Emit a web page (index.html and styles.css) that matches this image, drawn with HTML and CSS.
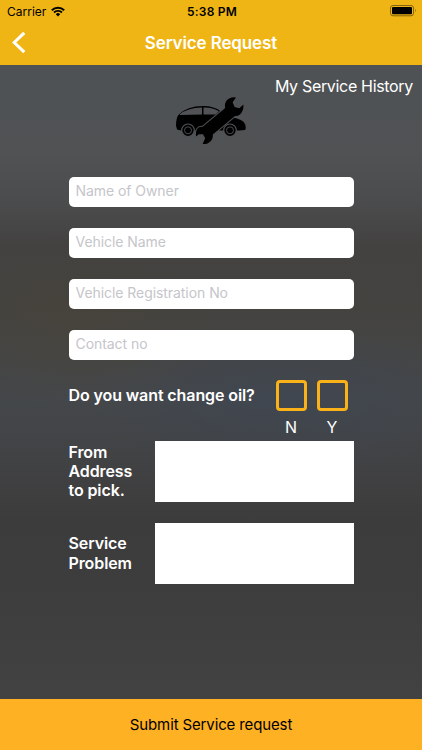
FILE: index.html
```html
<!DOCTYPE html>
<html lang="en">
<head>
    <meta charset="UTF-8">
    <meta name="viewport" content="width=device-width, initial-scale=1.0">
    <title>Service Request</title>
    <link rel="stylesheet" href="styles.css">
</head>
<body>
    <header class="header">
        <div class="status-bar">
            <div class="carrier">
                <span>Carrier</span>
                <svg class="wifi" viewBox="0 0 14 11" width="14" height="11">
                    <path d="M0.8 4.2a9 9 0 0 1 12.4 0M3 6.5a5.8 5.8 0 0 1 8 0" fill="none" stroke="#000" stroke-width="1.9"/>
                    <path d="M4.8 8.2a3.1 3.1 0 0 1 4.4 0L7 10.5z"/>
                </svg>
            </div>
            <span class="time">5:38 PM</span>
            <svg class="battery" viewBox="0 0 27 12" width="27" height="12">
                <rect x="0.5" y="0.5" width="23" height="10.3" rx="2.5" fill="none" stroke="#84640c"/>
                <rect x="2" y="2" width="20" height="7.3" rx="1"/>
                <path d="M25 3.8q1.5 1.8 0 3.6z" fill="#84640c"/>
            </svg>
        </div>
        <div class="nav-bar">
            <button class="back" aria-label="Back">
                <svg viewBox="0 0 14 22" width="14" height="22">
                    <path d="M12.3 0.8L2.2 10.5L12.3 20.2" fill="none" stroke="#fff" stroke-width="3"/>
                </svg>
            </button>
            <h1>Service Request</h1>
        </div>
    </header>

    <main class="content">
        <a class="history">My Service History</a>
        <svg class="logo" viewBox="175 96 72 50" width="72" height="50">
            <path d="M177 129.5L176 125.5Q176 118 178.8 114.5Q187 106.2 203 106Q214 105.8 221 111.5L231 117.5Q242.5 118.5 245 124Q246.5 128 245 130L239 130.5H181z"/>
            <path d="M179.5 114.5Q187 107.7 202 107.4V114.6L180 115.1zM203.5 107.4Q213 107.2 219 111.3L215.5 114.4H203.5z" fill="#505255"/>
            <g stroke="#505255">
                <circle cx="188" cy="130.3" r="6.3" stroke-width="1.2"/>
                <circle cx="188" cy="130.3" r="3.5" stroke-width="0.9"/>
                <circle cx="230" cy="130.3" r="6.3" stroke-width="1.2"/>
                <circle cx="230" cy="130.3" r="3.5" stroke-width="0.9"/>
                <path d="M234 97.3C227.5 97.3 223.8 102.5 225.2 108L202.4 127C198 126 195 130.5 196.2 136.6L198.8 134.2L203 134.3L205.2 138.3L202.6 144C209 144.4 213.4 140 212.8 134.4L235 116C240 117 244 111.3 243.4 104.6L239.3 108.3L234.6 107L232.6 102.3L236 97.6Z" stroke-width="2" paint-order="stroke"/>
            </g>
        </svg>

        <form class="form" id="serviceForm">
            <input type="text" placeholder="Name of Owner">
            <input type="text" placeholder="Vehicle Name">
            <input type="text" placeholder="Vehicle Registration No">
            <input type="text" placeholder="Contact no">

            <div class="oil">
                <span class="label">Do you want change oil?</span>
                <label class="choice"><input type="checkbox">N</label>
                <label class="choice"><input type="checkbox">Y</label>
            </div>

            <div class="row">
                <label class="label" for="address">From Address to pick.</label>
                <textarea id="address"></textarea>
            </div>
            <div class="row">
                <label class="label" for="problem">Service Problem</label>
                <textarea id="problem"></textarea>
            </div>
        </form>
    </main>

    <button class="submit" form="serviceForm">Submit Service request</button>
</body>
</html>
```
FILE: styles.css
```css
* {
    box-sizing: border-box;
}
body {
    font-family: Inter, "Liberation Sans", sans-serif;
    display: flex;
    flex-direction: column;
    height: 100vh;
    margin: 0;
    overflow: hidden;
    color: white;
    background:
        radial-gradient(ellipse 190px 75px at 280px 400px, rgba(60, 70, 86, 0.5), transparent),
        radial-gradient(ellipse 150px 90px at 80px 320px, rgba(76, 68, 52, 0.35), transparent),
        linear-gradient(#4e5254 65px, #505254 150px, #4b4c4d 200px, #434241 245px, #444340 310px, #44474a 400px, #414244 460px, #3d3c3c 520px, #3e3d3d 590px, #424242 699px);
}
svg {
    display: block;
}
.header {
    height: 65px;
    background: #efb515;
}
.status-bar {
    display: grid;
    grid-template-columns: 1fr auto 1fr;
    align-items: center;
    height: 22px;
    padding: 0 5px 0 7px;
    color: black;
    font-size: 12px;
}
.carrier {
    display: flex;
    align-items: center;
    gap: 5px;
}
.time {
    font-weight: 600;
    letter-spacing: 0.2px;
}
.battery {
    justify-self: end;
}
.nav-bar {
    display: grid;
    grid-template-columns: 40px 1fr 40px;
    align-items: center;
    height: 42px;
}
.nav-bar h1 {
    margin: 0;
    text-align: center;
    font-size: 17px;
    font-weight: 600;
    letter-spacing: -0.12px;
}
.back {
    padding: 0 0 0 12px;
    border: none;
    background: none;
}
.content {
    flex: 1;
    display: flex;
    flex-direction: column;
    align-items: center;
}
.history {
    align-self: flex-end;
    margin: 11px 9px 0 0;
    font-size: 16px;
    line-height: 20px;
    letter-spacing: -0.32px;
}
.form {
    display: flex;
    flex-direction: column;
    gap: 21px;
    width: 285px;
    margin-top: 31px;
}
.form input[type="text"] {
    width: 100%;
    height: 30px;
    padding: 0 7px 3px;
    border: none;
    border-radius: 5px;
    background: white;
    font-family: inherit;
    font-size: 14px;
}
.form input::placeholder {
    color: #c5c5ca;
    letter-spacing: -0.06px;
}
.label {
    font-size: 16px;
    font-weight: 600;
    line-height: 19.3px;
    letter-spacing: -0.1px;
}
.oil {
    display: flex;
    gap: 10px;
    height: 39px;
}
.oil .label {
    width: 197px;
    padding-top: 5px;
    white-space: nowrap;
}
.choice {
    display: flex;
    flex-direction: column;
    align-items: center;
    gap: 6px;
    font-size: 16px;
    line-height: 20px;
}
.choice input {
    appearance: none;
    flex-shrink: 0;
    width: 31px;
    height: 31px;
    margin: -1px 0 0;
    border: 3px solid #fbb218;
    border-radius: 4px;
}
.row {
    display: flex;
    align-items: center;
    height: 61px;
}
.row .label {
    width: 86px;
    padding-right: 18px;
}
.row textarea {
    flex: 1;
    height: 61px;
    padding: 8px;
    border: none;
    background: white;
    font-family: inherit;
    resize: none;
}
.submit {
    height: 51px;
    padding: 0;
    border: none;
    background: #ffb124;
    color: black;
    font-family: inherit;
    font-size: 15px;
    letter-spacing: -0.13px;
}
```
